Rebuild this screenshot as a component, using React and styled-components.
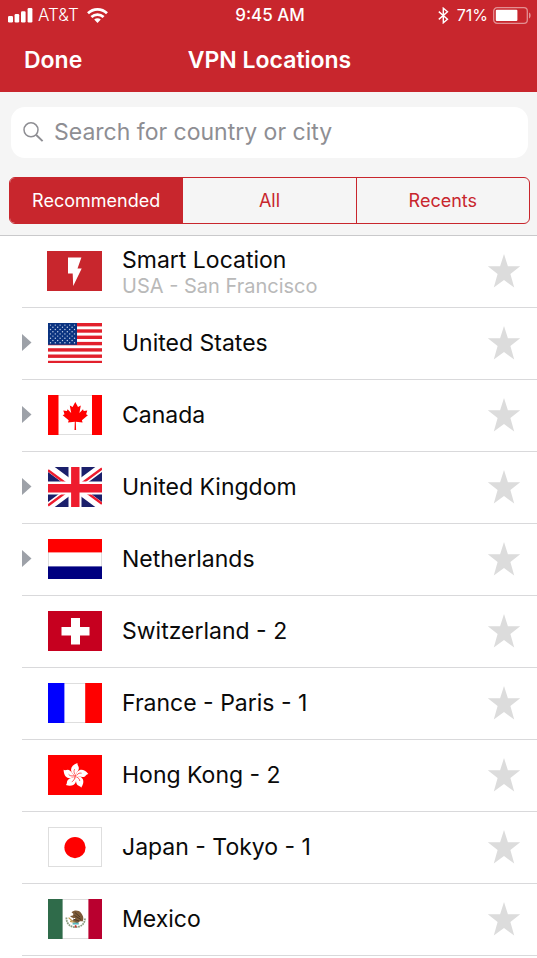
import { useState } from "react";
import styled, { createGlobalStyle } from "styled-components";

const GlobalStyle = createGlobalStyle`
    *{
        box-sizing: border-box;
    }
    body{
        margin: 0;
        background-color: #fff;
        font-family: Inter, "Liberation Sans", sans-serif;
        color: #0a0a0a;
    }
    button{
        font-family: inherit;
        border: none;
        background: none;
        padding: 0;
        cursor: pointer;
    }
`
const Page=styled.div`
    height: 100vh;
    overflow: hidden;
`
const Header=styled.header`
    background-color: #c8262d;
    color: #fff;
`
const StatusBar=styled.div`
    display: grid;
    grid-template-columns: 1fr auto 1fr;
    align-items: center;
    height: 30px;
    padding: 0 5px 0 8px;
    font-size: 17px;
`
const StatusGroup=styled.div`
    display: flex;
    align-items: center;
    justify-content: ${(props) => (props.$end ? "flex-end" : "flex-start")};
    gap: 5px;
`
const Carrier=styled.span`
    font-weight: 300;
    margin-right: 3px;
`
const Clock=styled.span`
    font-weight: 500;
`
const Percent=styled.span`
    font-size: 16px;
    margin-left: 3px;
`
const NavBar=styled.div`
    display: grid;
    grid-template-columns: 1fr auto 1fr;
    align-items: center;
    height: 62px;
    padding: 0 22px 2px 24px;
`
const DoneButton=styled.button`
    justify-self: start;
    color: #fff;
    font-size: 23px;
    font-weight: 600;
`
const Title=styled.h1`
    margin: 0;
    font-size: 23px;
    font-weight: 600;
`
const Filters=styled.div`
    display: flex;
    flex-direction: column;
    gap: 19px;
    padding: 15px 7px 11px 9px;
    background-color: #f5f5f5;
    border-bottom: 1px solid #c9c9cb;
`
const SearchBox=styled.label`
    display: flex;
    align-items: center;
    gap: 10px;
    height: 51px;
    margin: 0 2px;
    padding: 0 12px 2px;
    border-radius: 14px;
    background-color: #fff;
`
const SearchInput=styled.input`
    flex: 1;
    min-width: 0;
    padding: 0;
    border: none;
    outline: none;
    background: none;
    font-family: inherit;
    font-size: 23px;
    color: #0a0a0a;
    &::placeholder{
        color: #8e8e93;
        opacity: 1;
    }
`
const Segments=styled.div`
    display: flex;
    height: 47px;
    border: 1px solid #c8262d;
    border-radius: 6px;
    overflow: hidden;
`
const Segment=styled.button`
    flex: 1;
    font-size: 18px;
    color: ${(props) => (props.$active ? "#fff" : "#c8262d")};
    background-color: ${(props) => (props.$active ? "#c8262d" : "transparent")};
    & + &{
        border-left: 1px solid #c8262d;
    }
`
const List=styled.ul`
    list-style: none;
    margin: 0;
    padding: 0 0 0 22px;
`
const Row=styled.li`
    display: grid;
    grid-template-columns: 25px 55px 1fr auto;
    align-items: center;
    height: 72px;
    padding: 0 16px 2px 0;
    border-bottom: 1px solid #d9d9db;
`
const ExpandButton=styled.button`
    grid-column: 1;
    display: flex;
`
const FlagCell=styled.div`
    grid-column: 2;
    display: flex;
    justify-content: center;
`
const Names=styled.div`
    grid-column: 3;
    padding: ${(props) => (props.$tall ? "3px" : "0")} 0 0 20px;
`
const Name=styled.div`
    font-size: 23px;
    line-height: 28px;
`
const Detail=styled.div`
    font-size: 20px;
    line-height: 24px;
    color: #b9b9b9;
`
const StarButton=styled.button`
    grid-column: 4;
    display: flex;
`

const SignalIcon = () => (
    <svg width="25" height="15" viewBox="0 0 25 15" fill="#fff" aria-hidden="true">
        <rect x="0" y="8" width="5" height="6.5" rx="1.2" />
        <rect x="6.6" y="6" width="4.6" height="8.5" rx="1.2" />
        <rect x="13" y="3.2" width="4.6" height="11.3" rx="1.2" />
        <rect x="19.6" y="0" width="4.8" height="14.5" rx="1.2" />
    </svg>
)
const WifiIcon = () => (
    <svg width="21" height="15" viewBox="0 0 21 15" fill="none" stroke="#fff" strokeWidth="2.7" aria-hidden="true">
        <path d="M1 5.3C6.3.1 14.7.1 20 5.3" />
        <path d="M4.4 9.1C8 5.7 13 5.7 16.6 9.1" />
        <path d="M7.2 11.6c1.9-1.7 4.7-1.7 6.6 0L10.5 15z" fill="#fff" stroke="none" />
    </svg>
)
const BluetoothIcon = () => (
    <svg width="11" height="17" viewBox="0 0 11 17" fill="none" stroke="#fff" strokeWidth="1.4" aria-hidden="true">
        <path d="M.8 4.6l8.7 7.6-4.2 3.6V1.2l4.2 3.6L.8 12.4" />
    </svg>
)
const BatteryIcon = () => (
    <svg width="39" height="17" viewBox="0 0 39 17" aria-hidden="true">
        <rect x=".7" y=".7" width="33.6" height="15.6" rx="3.4" fill="none" stroke="#e38f92" strokeWidth="1.3" />
        <rect x="2.8" y="2.8" width="21.6" height="11.2" rx="1" fill="#fff" />
        <path d="M36 5.6c2.2.6 2.2 5.2 0 5.8z" fill="#e38f92" />
    </svg>
)
const SearchIcon = () => (
    <svg width="21" height="20" viewBox="0 0 21 20" fill="none" stroke="#8e8e93" aria-hidden="true">
        <circle cx="8" cy="7.8" r="7" strokeWidth="1.5" />
        <path d="M13 12.8l6.6 6.3" strokeWidth="2" />
    </svg>
)
const ArrowIcon = () => (
    <svg width="10" height="17" viewBox="0 0 10 17" aria-hidden="true">
        <path d="M0 0l9.5 8.5L0 17z" fill="#9da1a8" />
    </svg>
)
const StarIcon = ({ filled }) => (
    <svg width="34" height="36" viewBox="0 0 34 36" aria-hidden="true">
        <path
            d="M17 1L20.9 13.3 33.2 13.3 23.4 21.1 27.2 34.6 17 27 6.8 34.6 10.6 21.1.8 13.3 13.1 13.3z"
            fill={filled ? "#c8262d" : "#dcdcdc"}
        />
    </svg>
)

const Flag = ({ children, label }) => (
    <svg width="54" height="40" viewBox="0 0 54 40" role="img" aria-label={label}>
        {children}
    </svg>
)
const WhiteField = () => (
    <rect x=".5" y=".5" width="53" height="39" fill="#fff" stroke="#dedede" />
)

const starRows = [0, 1, 2, 3, 4, 5, 6, 7, 8]

const flags = {
    smart: (
        <svg width="55" height="40" viewBox="0 0 55 40" role="img" aria-label="Smart Location">
            <rect width="55" height="40" fill="#c8262d" />
            <path d="M21 6.4h13.4l-3.9 11.2h4.2L26.2 35l-.5-12.4H21z" fill="#fff" />
        </svg>
    ),
    us: (
        <Flag label="United States">
            <rect width="54" height="40" fill="#fff" />
            {[0, 1, 2, 3, 4, 5, 6].map((i) => (
                <rect key={i} y={i * 6.3} width="54" height="3.4" fill="#e2202c" />
            ))}
            <rect width="29" height="21.8" fill="#0a3380" />
            {starRows.map((r) =>
                Array.from({ length: r % 2 ? 5 : 6 }, (_, c) => (
                    <circle key={r + "-" + c} cx={2.5 + c * 4.8 + (r % 2 ? 2.4 : 0)} cy={2.1 + r * 2.2} r=".7" fill="#c9d4ea" />
                ))
            )}
        </Flag>
    ),
    ca: (
        <Flag label="Canada">
            <WhiteField />
            <path d="M0 0h10.5v40H0zM44 0h10v40H44z" fill="#f00" />
            <path
                d="M27.3 7l2.7 5 2.8-1.4-1.4 7.5 3.6-3.9.7 1.9 3.6-.7-1.2 3.8 1.8 1-6 5.1.7 2.3-6.8-.9.3 8.3h-1.6l.3-8.3-6.8.9.7-2.3-6-5.1 1.8-1-1.2-3.8 3.6.7.7-1.9 3.6 3.9-1.4-7.5L24.6 12z"
                fill="#f00"
            />
        </Flag>
    ),
    uk: (
        <Flag label="United Kingdom">
            <rect width="54" height="40" fill="#1b1f6b" />
            <path d="M0 0l54 40M54 0L0 40" stroke="#fff" strokeWidth="8" />
            <path d="M0 3.2l22 16.3M54 36.8L32 20.5M54 1.4L30 19.2M0 38.6l24-17.8" stroke="#ee1c2e" strokeWidth="2.4" />
            <path d="M27 0v40M0 21h54" stroke="#fff" strokeWidth="13" />
            <path d="M27.3 0v40M0 21.3h54" stroke="#ee1c2e" strokeWidth="8.4" />
        </Flag>
    ),
    nl: (
        <Flag label="Netherlands">
            <WhiteField />
            <rect width="54" height="13.4" fill="#f00" />
            <rect y="27.4" width="54" height="12.6" fill="#000080" />
        </Flag>
    ),
    ch: (
        <Flag label="Switzerland">
            <rect width="54" height="40" fill="#c6001f" />
            <path d="M23 7h9v9h9.5v8.4H32v9h-9v-9h-9.5V16H23z" fill="#fff" />
        </Flag>
    ),
    fr: (
        <Flag label="France">
            <WhiteField />
            <rect width="16.4" height="40" fill="#00f" />
            <rect x="37.2" width="16.8" height="40" fill="#f00" />
        </Flag>
    ),
    hk: (
        <Flag label="Hong Kong">
            <rect width="54" height="40" fill="#f00" />
            {[0, 72, 144, 216, 288].map((angle) => (
                <g key={angle} transform={`translate(27.3 20.9) rotate(${angle})`}>
                    <path d="M0-.4C-5.6-3.2-6.4-10 2.2-13c-.6 2.2 2.2 3.4 1.2 6.4C2.6-4 .8-3.2 0-.4z" fill="#fff" />
                    <path d="M-.2-1.4C-1.8-3.6-1.4-5.4-.6-6.8" fill="none" stroke="#f00" strokeWidth=".6" />
                </g>
            ))}
        </Flag>
    ),
    jp: (
        <Flag label="Japan">
            <WhiteField />
            <circle cx="27" cy="20.6" r="10.6" fill="#f00" />
        </Flag>
    ),
    mx: (
        <Flag label="Mexico">
            <WhiteField />
            <rect width="14.6" height="40" fill="#2f6b4a" />
            <rect x="40.4" width="13.6" height="40" fill="#b9002f" />
            <path d="M18.4 18.5c0 6.5 3.8 9.6 9.2 9.6s9.2-3 9.4-9" fill="none" stroke="#8b9c80" strokeWidth="1.8" strokeDasharray="1.8 .7" />
            <path d="M23.5 13.2c3-2.4 7.4-2 9.6.8 2.6 3.2 2.8 6.6 1.4 8.6-2-.6-3.2-.4-4.6 1.6-2-.2-4.6-.6-6.2-2.6 2-.4 3.6-1.2 3.6-2.6-2.2.2-4-.4-5.2-2 2.4 0 3.4-.8 3.2-2.2z" fill="#7b5a38" />
            <path d="M27 13.5l5 4.5M26.5 16.5l6.5 4M25 20l6 2" stroke="#4a3524" strokeWidth=".9" />
            <path d="M20.6 18.6l3.4 3.2M22 22.4l5 1" stroke="#c79a4c" strokeWidth="1.2" />
            <path d="M24.6 24.6h6.2" stroke="#58b5bd" strokeWidth="1.9" />
            <path d="M27.6 26.2v2.4" stroke="#c33" strokeWidth="1.6" />
        </Flag>
    ),
}

const locations = [
    { flag: "smart", name: "Smart Location", detail: "USA - San Francisco" },
    { flag: "us", name: "United States", expandable: true },
    { flag: "ca", name: "Canada", expandable: true },
    { flag: "uk", name: "United Kingdom", expandable: true },
    { flag: "nl", name: "Netherlands", expandable: true },
    { flag: "ch", name: "Switzerland - 2" },
    { flag: "fr", name: "France - Paris - 1" },
    { flag: "hk", name: "Hong Kong - 2" },
    { flag: "jp", name: "Japan - Tokyo - 1" },
    { flag: "mx", name: "Mexico" },
]
const tabs = ["Recommended", "All", "Recents"]

function App(){
    const [tab, setTab] = useState("Recommended")
    const [starred, setStarred] = useState([])

    const toggleStar = (flag) => {
        setStarred(starred.includes(flag) ? starred.filter((f) => f !== flag) : [...starred, flag])
    }

    return(
        <Page>
            <GlobalStyle />
            <Header>
                <StatusBar>
                    <StatusGroup>
                        <SignalIcon />
                        <Carrier>AT&amp;T</Carrier>
                        <WifiIcon />
                    </StatusGroup>
                    <Clock>9:45 AM</Clock>
                    <StatusGroup $end>
                        <BluetoothIcon />
                        <Percent>71%</Percent>
                        <BatteryIcon />
                    </StatusGroup>
                </StatusBar>
                <NavBar>
                    <DoneButton type="button">Done</DoneButton>
                    <Title>VPN Locations</Title>
                </NavBar>
            </Header>
            <Filters>
                <SearchBox>
                    <SearchIcon />
                    <SearchInput type="text" aria-label="Search" placeholder="Search for country or city" />
                </SearchBox>
                <Segments>
                    {tabs.map((t) => (
                        <Segment key={t} type="button" $active={t === tab} aria-pressed={t === tab} onClick={() => setTab(t)}>
                            {t}
                        </Segment>
                    ))}
                </Segments>
            </Filters>
            <List>
                {locations.map((loc) => (
                    <Row key={loc.flag}>
                        {loc.expandable && (
                            <ExpandButton type="button" aria-label={"Expand " + loc.name}>
                                <ArrowIcon />
                            </ExpandButton>
                        )}
                        <FlagCell>{flags[loc.flag]}</FlagCell>
                        <Names $tall={Boolean(loc.detail)}>
                            <Name>{loc.name}</Name>
                            {loc.detail && <Detail>{loc.detail}</Detail>}
                        </Names>
                        <StarButton type="button" aria-label={"Favorite " + loc.name} onClick={() => toggleStar(loc.flag)}>
                            <StarIcon filled={starred.includes(loc.flag)} />
                        </StarButton>
                    </Row>
                ))}
            </List>
        </Page>
    )
}

export default App
